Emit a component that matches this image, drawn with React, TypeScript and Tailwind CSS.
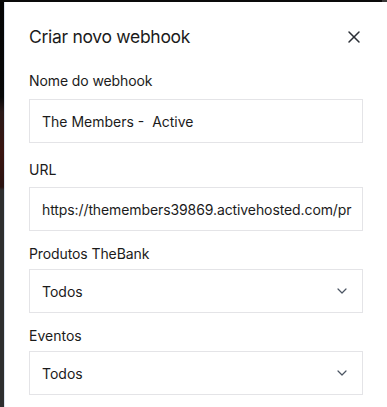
import React from "react";

const font = { fontFamily: "Inter, 'Noto Sans', sans-serif" };

function Chevron() {
  return (
    <svg width="16" height="16" viewBox="0 0 24 24" fill="none" stroke="#4b5563" strokeWidth="1.8" strokeLinecap="round" strokeLinejoin="round">
      <path d="m6 9 6 6 6-6" />
    </svg>
  );
}

export default function App() {
  return (
    <div className="w-[387px] h-[407px] flex flex-col overflow-hidden bg-white" style={font}>
      <div className="h-[2px] flex shrink-0">
        <div className="flex-1 bg-[#0a0a0a]" />
        <div className="w-[5px] bg-[#3a3a3a]" />
      </div>
      <div className="flex flex-1 min-h-0">
        <div className="w-[4px] shrink-0 bg-[linear-gradient(to_bottom,#050505_0px,#080808_95px,#2a1a18_110px,#3a1410_150px,#2a1210_185px,#2e2e2e_188px,#2e2e2e_100%)]" />
        <div className="flex-1 min-w-0 border-l border-[#dbe3ee] bg-white pl-6 pr-[24px] text-[#1b1b1b]">
          <div className="mt-[21px] h-[28px] flex items-center justify-between">
            <h1 className="text-[17.5px] leading-[28px] font-normal tracking-[-0.3px]">Criar novo webhook</h1>
            <svg width="20" height="20" viewBox="0 0 24 24" fill="none" stroke="#2b2f36" strokeWidth="1.8" strokeLinecap="round" className="mr-[-1px]">
              <path d="M18 6 6 18" />
              <path d="m6 6 12 12" />
            </svg>
          </div>

          <div className="mt-[20px] text-[14px] leading-[20px] tracking-[-0.1px]">Nome do webhook</div>
          <div className="mt-[8px] h-[44px] border border-[#e4e4e7] flex items-center px-3 text-[14px] whitespace-pre">The Members -  Active</div>

          <div className="mt-[17px] text-[14px] leading-[20px]">URL</div>
          <div className="mt-[7px] h-[44px] border border-[#e4e4e7] flex items-center px-3 text-[14px] overflow-hidden">
            <span className="whitespace-nowrap tracking-[-0.1px]">https://themembers39869.activehosted.com/pr</span>
          </div>

          <div className="mt-[13px] text-[14px] leading-[20px] tracking-[-0.1px]">Produtos TheBank</div>
          <div className="mt-[5px] h-[44px] border border-[#e4e4e7] flex items-center justify-between pl-3 pr-[12px] text-[14px]">
            <span>Todos</span>
            <Chevron />
          </div>

          <div className="mt-[13px] text-[14px] leading-[20px]">Eventos</div>
          <div className="mt-[5px] h-[44px] border border-[#e4e4e7] flex items-center justify-between pl-3 pr-[12px] text-[14px]">
            <span>Todos</span>
            <Chevron />
          </div>
        </div>
      </div>
    </div>
  );
}
